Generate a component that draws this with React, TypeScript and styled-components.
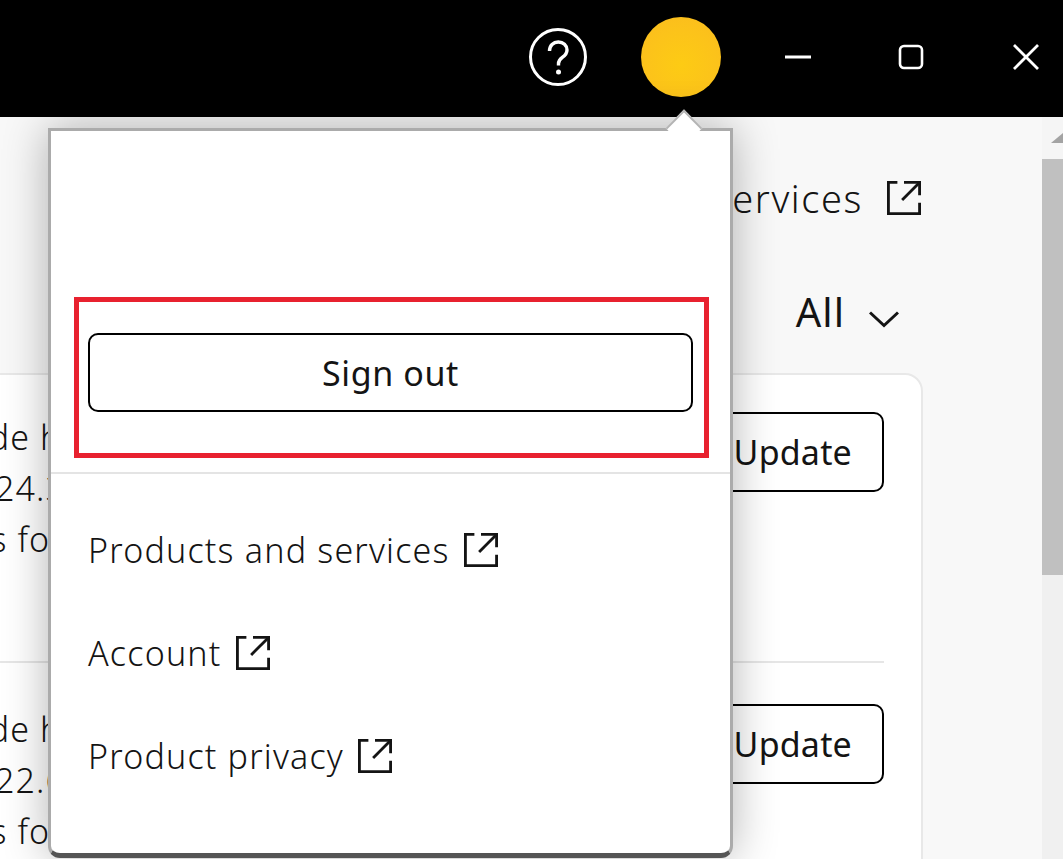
import React from "react";
import styled, { createGlobalStyle } from "styled-components";

const GlobalStyle = createGlobalStyle`
  html, body {
    margin: 0;
    padding: 0;
    height: 100%;
    overflow: hidden;
    background: #f8f8f8;
  }

  body {
    font-family: "Noto Sans", "Open Sans", sans-serif;
    color: #141414;
  }
`;

const ExternalIcon: React.FC = () => (
  <IconSvg width="34" height="34" viewBox="0 0 36 36" fill="none" stroke="currentColor" strokeWidth="3">
    <path d="M11 1.500H1.500V34.500H34.500V23" />
    <path d="M18 1.500H34.500V15" />
    <path d="M34.500 1.500L16 20" />
  </IconSvg>
);

const updates = ["2024.3", "2022.6"];

export default function App() {
  return (
    <Page>
      <GlobalStyle />
      <TitleBar>
        <HelpIcon width="60" height="60" viewBox="0 0 60 60" fill="none">
          <circle cx="30" cy="30" r="27.5" stroke="#fff" strokeWidth="3" />
          <path
            d="M21.500 24c0-5.500 3.800-9 8.800-9 5 0 8.700 3.400 8.700 8 0 3.600-1.900 5.400-4.400 7.200-2.600 1.900-4.100 3.500-4.100 6.600v1.700"
            stroke="#fff"
            strokeWidth="3.400"
          />
          <circle cx="30.500" cy="45" r="2.500" fill="#fff" />
        </HelpIcon>
        <Avatar />
        <WindowButton $gap={87}>
          <svg width="26" height="4" viewBox="0 0 26 4">
            <path d="M0 2H26" stroke="#fff" strokeWidth="3" />
          </svg>
        </WindowButton>
        <WindowButton $gap={89}>
          <svg width="26" height="26" viewBox="0 0 26 26" fill="none">
            <rect x="2" y="2" width="22" height="22" rx="4" stroke="#fff" strokeWidth="2.600" />
          </svg>
        </WindowButton>
        <WindowButton $gap={0}>
          <svg width="26" height="26" viewBox="0 0 26 26" fill="none">
            <path d="M1 1L25 25M25 1L1 25" stroke="#fff" strokeWidth="2.800" />
          </svg>
        </WindowButton>
      </TitleBar>

      <Body>
        <Content>
          <ServicesLink>
            Products and services
            <ExternalIcon />
          </ServicesLink>
          <FilterRow>
            <FilterLabel>All</FilterLabel>
            <Chevron width="30" height="18" viewBox="0 0 30 18" fill="none">
              <path d="M1 2.500L15 15.500L29 2.500" stroke="#141414" strokeWidth="3" />
            </Chevron>
          </FilterRow>
          <Card>
            {updates.map((version) => (
              <UpdateRow key={version}>
                <UpdateText>
                  <TextLine $offset={-111}>Upgrade has been released</TextLine>
                  <TextLine $offset={-44}>{version}</TextLine>
                  <TextLine $offset={-219}>Release notes for this update</TextLine>
                </UpdateText>
                <OutlineButton>Update</OutlineButton>
              </UpdateRow>
            ))}
          </Card>
        </Content>

        <ScrollTrack>
          <ScrollArrow>
            <svg width="21" height="42" viewBox="0 0 21 42">
              <path d="M9 26L21 16V26Z" fill="#a3a3a3" />
            </svg>
          </ScrollArrow>
          <ScrollThumb />
        </ScrollTrack>

        <Popup>
          <Arrow />
          <Highlight>
            <SignOut>Sign out</SignOut>
          </Highlight>
          <Divider />
          <MenuList>
            <MenuLink>
              Products and services
              <ExternalIcon />
            </MenuLink>
            <MenuLink>
              Account
              <ExternalIcon />
            </MenuLink>
            <MenuLink>
              Product privacy
              <ExternalIcon />
            </MenuLink>
          </MenuList>
        </Popup>
      </Body>
    </Page>
  );
}

const Page = styled.div`
  display: flex;
  flex-direction: column;
  width: 1063px;
  height: 859px;
  overflow: hidden;
`;

const TitleBar = styled.div`
  display: flex;
  align-items: center;
  flex: 0 0 117px;
  box-sizing: border-box;
  padding: 0 0 3px 528px;
  background: #000;
`;

const HelpIcon = styled.svg`
  flex: none;
  margin-right: 53px;
`;

const Avatar = styled.div`
  flex: none;
  width: 80px;
  height: 80px;
  margin-right: 64px;
  border-radius: 50%;
  background: radial-gradient(circle at 50% 60%, #fdcb14 0%, #fcc31a 55%, #fbbb1e 100%);
`;

const WindowButton = styled.div<{ $gap: number }>`
  display: flex;
  justify-content: center;
  flex: none;
  width: 26px;
  margin-right: ${(p) => p.$gap}px;

  svg {
    display: block;
  }
`;

const Body = styled.div`
  position: relative;
  display: flex;
  flex: 1;
  min-height: 0;
`;

const Content = styled.div`
  flex: 1;
  min-width: 0;
  overflow: hidden;
  padding-right: 119px;
`;

const IconSvg = styled.svg`
  flex: none;
`;

const ServicesLink = styled.div`
  display: flex;
  align-items: center;
  justify-content: flex-end;
  gap: 24px;
  height: 36px;
  margin-top: 63px;
  padding-right: 2px;
  font-size: 38px;
  font-weight: 300;
  letter-spacing: 1.600px;
  white-space: nowrap;
`;

const FilterRow = styled.div`
  display: flex;
  align-items: center;
  justify-content: flex-end;
  gap: 24px;
  height: 50px;
  margin-top: 70px;
  padding-right: 24px;
`;

const FilterLabel = styled.span`
  font-size: 40px;
  font-weight: 400;
  letter-spacing: 1px;
`;

const Chevron = styled.svg`
  flex: none;
  margin-top: 16px;
`;

const Card = styled.div`
  height: 600px;
  margin: 37px 0 0 -4px;
  padding: 37px 37px 0 0;
  background: #fff;
  border: 2px solid #e8e8e8;
  border-top-right-radius: 18px;
`;

const UpdateRow = styled.div`
  display: flex;
  justify-content: space-between;
  height: 249px;
  margin-bottom: 41px;
  border-bottom: 2px solid #e6e6e6;
  overflow: hidden;
`;

const UpdateText = styled.div`
  flex: 1;
  min-width: 0;
  overflow: hidden;
  font-size: 34px;
  font-weight: 300;
  letter-spacing: 1.1px;
  line-height: 51px;
  white-space: nowrap;
`;

const TextLine = styled.div<{ $offset: number }>`
  margin-left: ${(p) => p.$offset}px;
`;

const OutlineButton = styled.button`
  flex: none;
  width: 300px;
  height: 80px;
  padding: 0 30px 0 0;
  text-align: right;
  background: #fff;
  border: 2px solid #000;
  border-radius: 10px;
  font: 400 34px "Noto Sans", sans-serif;
  letter-spacing: 0.2px;
  color: #141414;
`;

const ScrollTrack = styled.div`
  display: flex;
  flex-direction: column;
  flex: 0 0 21px;
  background: #f0f0f0;
`;

const ScrollArrow = styled.div`
  flex: 0 0 42px;
  background: #f5f5f5;

  svg {
    display: block;
  }
`;

const ScrollThumb = styled.div`
  flex: 0 0 416px;
  background: #c0c0c0;
`;

const Popup = styled.div`
  position: absolute;
  top: 11px;
  left: 48px;
  width: 685px;
  height: 730px;
  box-sizing: border-box;
  background: #fff;
  border: solid #ababab;
  border-width: 3px 3px 5px 3px;
  border-bottom-color: #555;
  border-radius: 0 0 12px 12px;
  box-shadow: 0 0 45px rgba(0, 0, 0, 0.3);
`;

const Arrow = styled.div`
  position: absolute;
  top: -16px;
  left: 620px;
  width: 26px;
  height: 26px;
  box-sizing: border-box;
  background: #fff;
  border: solid #b4b4b4;
  border-width: 2px 0 0 2px;
  transform: rotate(45deg);
`;

const Highlight = styled.div`
  position: relative;
  box-sizing: border-box;
  width: 635px;
  height: 161px;
  margin: 166px 0 0 23px;
  padding: 31px 11px 0 9px;
  border: 5px solid #e8212f;
`;

const SignOut = styled.div`
  display: flex;
  align-items: center;
  justify-content: center;
  height: 79px;
  box-sizing: border-box;
  border: 2px solid #000;
  border-radius: 10px;
  font-size: 34px;
  letter-spacing: 0.6px;
`;

const Divider = styled.div`
  height: 2px;
  margin-top: 14px;
  background: #e4e4e4;
`;

const MenuList = styled.div`
  display: flex;
  flex-direction: column;
  gap: 53px;
  margin: 51px 0 0 37px;
`;

const MenuLink = styled.div`
  display: flex;
  align-items: center;
  gap: 14px;
  height: 50px;
  font-size: 34px;
  font-weight: 300;
  letter-spacing: 1.200px;
`;
